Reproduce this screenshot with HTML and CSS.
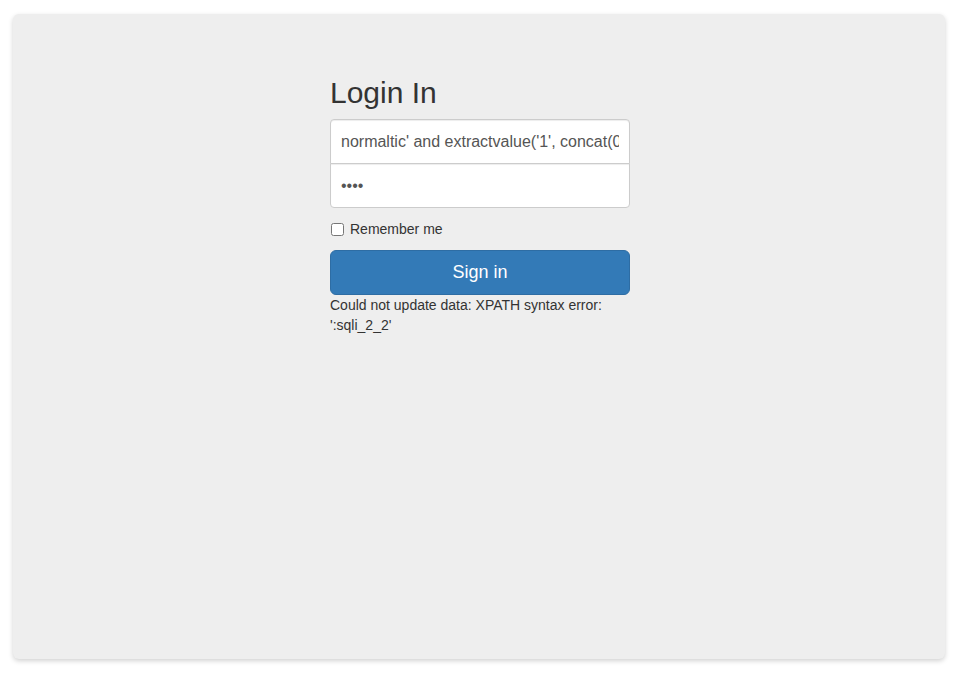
FILE: index.html
```html
<!DOCTYPE html>
<html lang="en">
<head>
    <meta charset="UTF-8">
    <meta name="viewport" content="width=device-width, initial-scale=1.0">
    <title>Login In</title>
    <link rel="stylesheet" href="styles.css">
</head>
<body>
    <div class="panel">
        <form class="form-signin">
            <h2 class="form-signin-heading">Login In</h2>
            <input type="text" class="form-control first" value="normaltic' and extractvalue('1', concat(0x3a, (select database()))) and '1'='1">
            <input type="password" class="form-control last" value="1234">
            <div class="checkbox">
                <label><input type="checkbox"> Remember me</label>
            </div>
            <button type="button" class="btn-signin">Sign in</button>
            <div class="error">Could not update data: XPATH syntax error: ':sqli_2_2'</div>
        </form>
    </div>
</body>
</html>
```

FILE: styles.css
```css
* { box-sizing: border-box; }
body { margin: 0; background: #fff; font-family: "Liberation Sans", Arial, sans-serif; font-size: 14px; line-height: 20px; color: #333; }
.panel { margin: 14px 13px; height: 645px; background: #eee; border-radius: 6px; box-shadow: 0 2px 5px rgba(0,0,0,.18); padding: 42px 0 0 2px; }
.form-signin { width: 300px; margin: 0 auto; }
.form-signin-heading { font-size: 30px; font-weight: 500; line-height: 33px; margin: 20px 0 10px; color: #333; }
.form-control { display: block; width: 100%; height: 45px; padding: 10px; font-family: inherit; font-size: 16px; color: #555; background: #fff; border: 1px solid #ccc; border-radius: 4px; box-shadow: inset 0 1px 1px rgba(0,0,0,.075); outline: none; }
.form-control.first { border-bottom-left-radius: 0; border-bottom-right-radius: 0; margin-bottom: -1px; }
.form-control.last { border-top-left-radius: 0; border-top-right-radius: 0; }
.checkbox { margin: 11px 0 10px; }
.checkbox label { display: flex; align-items: center; cursor: pointer; }
.checkbox input { margin: 0 6px 0 1px; width: 13px; height: 13px; }
.btn-signin { display: block; width: 100%; height: 45px; margin-top: 11px; font-family: inherit; font-size: 18px; color: #fff; background: #337ab7; border: 1px solid #2e6da4; border-radius: 6px; cursor: pointer; }
.error { padding-right: 20px; }
```
